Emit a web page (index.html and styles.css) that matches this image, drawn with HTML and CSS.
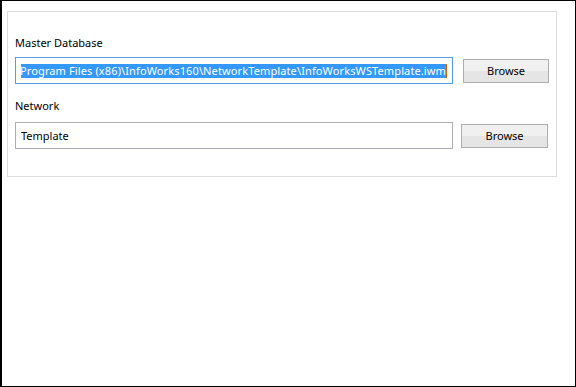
FILE: index.html
```html
<!DOCTYPE html>
<html>
<head>
<meta charset="utf-8">
<link rel="stylesheet" href="styles.css">
</head>
<body>
<div class="window">
  <div class="panel">
    <div class="label label-first">Master Database</div>
    <div class="row">
      <div class="textbox focused">
        <div class="clip">
          <span class="sel">C:\Program Files (x86)\InfoWorks160\NetworkTemplate\InfoWorksWSTemplate.iwm</span><span class="caret"></span>
        </div>
      </div>
      <div class="button">Browse</div>
    </div>
    <div class="label label-second">Network</div>
    <div class="row row-tight">
      <div class="textbox">
        <div class="clip clip-left">Template</div>
      </div>
      <div class="button button-wide">Browse</div>
    </div>
  </div>
</div>
</body>
</html>
```
FILE: styles.css
```css
html, body {
  margin: 0;
  padding: 0;
  background: #ffffff;
}
.window {
  width: 576px;
  height: 387px;
  box-sizing: border-box;
  border: 1px solid #000000;
  border-left-width: 2px;
  background: #ffffff;
  padding: 10px 0 0 5px;
  font-family: "Noto Sans", "Open Sans", sans-serif;
  font-size: 11px;
  color: #000000;
}
.panel {
  width: 550px;
  box-sizing: border-box;
  border: 1px solid #dcdcdc;
  padding: 23px 0 27px 7px;
}
.label {
  line-height: 16px;
  height: 16px;
  white-space: nowrap;
}
.label-first {
  margin-bottom: 6px;
}
.label-second {
  margin-top: 14px;
  margin-bottom: 8px;
}
.row {
  display: flex;
  align-items: center;
  gap: 10px;
}
.row-tight {
  gap: 8px;
}
.textbox {
  width: 438px;
  height: 27px;
  box-sizing: border-box;
  border: 1px solid #abadb3;
  padding: 0 5px;
  display: flex;
  align-items: center;
  background: #ffffff;
}
.textbox.focused {
  border-color: #569de5;
}
.clip {
  flex: 1;
  overflow: hidden;
  white-space: nowrap;
  display: flex;
  justify-content: flex-end;
  align-items: center;
  height: 14px;
  line-height: 14px;
}
.clip-left {
  justify-content: flex-start;
  height: 16px;
  line-height: 16px;
}
.sel {
  background: #3399ff;
  color: #ffffff;
  flex: none;
  letter-spacing: 0.12px;
}
.caret {
  flex: none;
  width: 1px;
  height: 14px;
  background: #cc6600;
}
.button {
  width: 86px;
  height: 24px;
  box-sizing: border-box;
  border: 1px solid #adadad;
  background: linear-gradient(#f0f0f0 0%, #f0f0f0 50%, #e5e5e5 50%, #e5e5e5 100%);
  display: flex;
  align-items: center;
  justify-content: center;
  line-height: 16px;
}
.button-wide {
  width: 87px;
}
```
